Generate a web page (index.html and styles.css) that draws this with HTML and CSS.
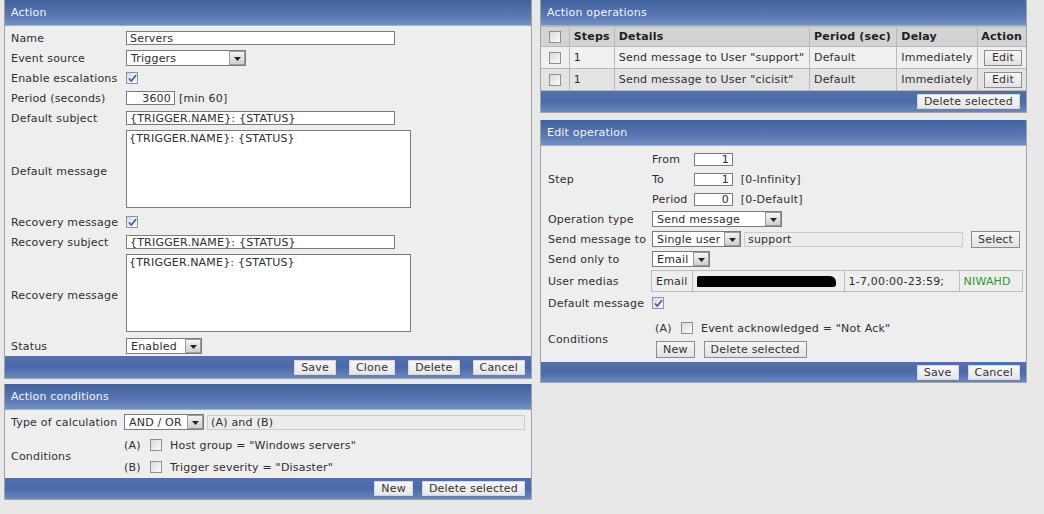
FILE: index.html
```html
<!DOCTYPE html>
<html lang="en">
<head>
    <meta charset="UTF-8">
    <title>Configuration of actions</title>
    <link rel="stylesheet" href="styles.css">
</head>
<body>

<div class="page">

    <div class="col col-left">

        <!-- Action -->
        <div class="panel">
            <div class="panel-head">Action</div>
            <div class="panel-body action-body">
                <div class="row">
                    <div class="lbl">Name</div>
                    <input type="text" class="text w-name" value="Servers">
                </div>
                <div class="row">
                    <div class="lbl">Event source</div>
                    <span class="select w-source"><span class="sel-val">Triggers</span><span class="sel-btn"><svg width="7" height="4" viewBox="0 0 7 4"><path d="M0 0h7L3.5 4z" fill="#222"/></svg></span></span>
                </div>
                <div class="row">
                    <div class="lbl">Enable escalations</div>
                    <span class="check on"><svg width="9" height="9" viewBox="0 0 9 9"><path d="M1 4.5l2.3 2.6L8 1.2" fill="none" stroke="#3d5a93" stroke-width="1.6"/></svg></span>
                </div>
                <div class="row">
                    <div class="lbl">Period (seconds)</div>
                    <input type="text" class="text num w-period" value="3600">
                    <span class="hint">[min 60]</span>
                </div>
                <div class="row">
                    <div class="lbl">Default subject</div>
                    <input type="text" class="text w-name" value="{TRIGGER.NAME}: {STATUS}">
                </div>
                <div class="row row-area">
                    <div class="lbl">Default message</div>
                    <textarea class="area">{TRIGGER.NAME}: {STATUS}</textarea>
                </div>
                <div class="row">
                    <div class="lbl">Recovery message</div>
                    <span class="check on"><svg width="9" height="9" viewBox="0 0 9 9"><path d="M1 4.5l2.3 2.6L8 1.2" fill="none" stroke="#3d5a93" stroke-width="1.6"/></svg></span>
                </div>
                <div class="row">
                    <div class="lbl">Recovery subject</div>
                    <input type="text" class="text w-name" value="{TRIGGER.NAME}: {STATUS}">
                </div>
                <div class="row row-area">
                    <div class="lbl">Recovery message</div>
                    <textarea class="area">{TRIGGER.NAME}: {STATUS}</textarea>
                </div>
                <div class="row">
                    <div class="lbl">Status</div>
                    <span class="select w-status"><span class="sel-val">Enabled</span><span class="sel-btn"><svg width="7" height="4" viewBox="0 0 7 4"><path d="M0 0h7L3.5 4z" fill="#222"/></svg></span></span>
                </div>
            </div>
            <div class="panel-foot foot-main">
                <button class="btn">Save</button>
                <button class="btn">Clone</button>
                <button class="btn">Delete</button>
                <button class="btn">Cancel</button>
            </div>
        </div>

        <!-- Action conditions -->
        <div class="panel">
            <div class="panel-head">Action conditions</div>
            <div class="panel-body cond-body">
                <div class="row">
                    <div class="lbl lbl-cond">Type of calculation</div>
                    <span class="select w-calc"><span class="sel-val">AND / OR</span><span class="sel-btn"><svg width="7" height="4" viewBox="0 0 7 4"><path d="M0 0h7L3.5 4z" fill="#222"/></svg></span></span>
                    <input type="text" class="text ro w-formula" value="(A) and (B)" readonly>
                </div>
                <div class="row row-block calc-cond">
                    <div class="lbl lbl-cond">Conditions</div>
                    <div class="cond-list">
                        <div class="cond-item">
                            <span class="cond-tag">(A)</span>
                            <span class="check"></span>
                            <span>Host group = "Windows servers"</span>
                        </div>
                        <div class="cond-item">
                            <span class="cond-tag">(B)</span>
                            <span class="check"></span>
                            <span>Trigger severity = "Disaster"</span>
                        </div>
                    </div>
                </div>
            </div>
            <div class="panel-foot foot-small foot-cond">
                <button class="btn">New</button>
                <button class="btn">Delete selected</button>
            </div>
        </div>
    </div>

    <div class="col col-right">

        <!-- Action operations -->
        <div class="panel">
            <div class="panel-head">Action operations</div>
            <table class="list">
                <thead>
                    <tr>
                        <th class="c-check"><span class="check"></span></th>
                        <th class="c-steps">Steps</th>
                        <th class="c-details">Details</th>
                        <th class="c-period">Period (sec)</th>
                        <th class="c-delay">Delay</th>
                        <th class="c-action">Action</th>
                    </tr>
                </thead>
                <tbody>
                    <tr class="odd">
                        <td class="c-check"><span class="check"></span></td>
                        <td>1</td>
                        <td>Send message to User "support"</td>
                        <td>Default</td>
                        <td>Immediately</td>
                        <td class="c-action"><button class="btn btn-edit">Edit</button></td>
                    </tr>
                    <tr class="even">
                        <td class="c-check"><span class="check"></span></td>
                        <td>1</td>
                        <td>Send message to User "cicisit"</td>
                        <td>Default</td>
                        <td>Immediately</td>
                        <td class="c-action"><button class="btn btn-edit">Edit</button></td>
                    </tr>
                </tbody>
            </table>
            <div class="panel-foot foot-ops">
                <button class="btn">Delete selected</button>
            </div>
        </div>

        <!-- Edit operation -->
        <div class="panel">
            <div class="panel-head">Edit operation</div>
            <div class="panel-body op-body">
                <div class="row row-block">
                    <div class="lbl lbl-op">Step</div>
                    <div class="step-grid">
                        <span class="sub">From</span>
                        <span><input type="text" class="text num w-step" value="1"></span>
                        <span class="sub">To</span>
                        <span><input type="text" class="text num w-step" value="1"> <span class="hint">[0-Infinity]</span></span>
                        <span class="sub">Period</span>
                        <span><input type="text" class="text num w-step" value="0"> <span class="hint">[0-Default]</span></span>
                    </div>
                </div>
                <div class="row">
                    <div class="lbl lbl-op">Operation type</div>
                    <span class="select w-optype"><span class="sel-val">Send message</span><span class="sel-btn"><svg width="7" height="4" viewBox="0 0 7 4"><path d="M0 0h7L3.5 4z" fill="#222"/></svg></span></span>
                </div>
                <div class="row">
                    <div class="lbl lbl-op">Send message to</div>
                    <span class="select w-target"><span class="sel-val">Single user</span><span class="sel-btn"><svg width="7" height="4" viewBox="0 0 7 4"><path d="M0 0h7L3.5 4z" fill="#222"/></svg></span></span>
                    <input type="text" class="text ro w-user" value="support" readonly>
                    <button class="btn btn-edit btn-select">Select</button>
                </div>
                <div class="row">
                    <div class="lbl lbl-op">Send only to</div>
                    <span class="select w-media"><span class="sel-val">Email</span><span class="sel-btn"><svg width="7" height="4" viewBox="0 0 7 4"><path d="M0 0h7L3.5 4z" fill="#222"/></svg></span></span>
                </div>
                <div class="row row-medias">
                    <div class="lbl lbl-op">User medias</div>
                    <table class="medias">
                        <tr>
                            <td class="m-type">Email</td>
                            <td class="m-addr"><span class="redact"></span></td>
                            <td class="m-when">1-7,00:00-23:59;</td>
                            <td class="m-sev">NIWAHD</td>
                        </tr>
                    </table>
                </div>
                <div class="row">
                    <div class="lbl lbl-op">Default message</div>
                    <span class="check on"><svg width="9" height="9" viewBox="0 0 9 9"><path d="M1 4.5l2.3 2.6L8 1.2" fill="none" stroke="#3d5a93" stroke-width="1.6"/></svg></span>
                </div>
                <div class="row row-block op-cond">
                    <div class="lbl lbl-op">Conditions</div>
                    <div class="cond-list">
                        <div class="cond-item">
                            <span class="cond-tag">(A)</span>
                            <span class="check"></span>
                            <span>Event acknowledged = "Not Ack"</span>
                        </div>
                        <div class="cond-btns">
                            <button class="btn btn-edit">New</button>
                            <button class="btn btn-edit">Delete selected</button>
                        </div>
                    </div>
                </div>
            </div>
            <div class="panel-foot foot-small">
                <button class="btn">Save</button>
                <button class="btn">Cancel</button>
            </div>
        </div>
    </div>

</div>

</body>
</html>
```

FILE: styles.css
```css
body {
    margin: 0;
    background-color: #e8e8e8;
    font-family: "DejaVu Sans", Verdana, sans-serif;
    font-size: 11px;
    letter-spacing: 0.2px;
    color: #2e2e2e;
}

.page {
    display: flex;
    align-items: flex-start;
    gap: 8px;
    padding-left: 4px;
}

.col {
    display: flex;
    flex-direction: column;
}
.col-left {
    width: 528px;
    gap: 5px;
}
.col-right {
    width: 487px;
    gap: 7px;
}

/* panels */
.panel {
    background-color: #eeeeee;
    border: 1px solid #a3a3a3;
    border-top: none;
}

.panel-head {
    height: 25px;
    line-height: 25px;
    padding-left: 6px;
    color: #f2f4fa;
    background: linear-gradient(#42629f, #5877b0 60%, #7390c2);
    border-bottom: 1px solid #9fb0cf;
}

.panel-foot {
    height: 22px;
    display: flex;
    justify-content: flex-end;
    align-items: center;
    gap: 9px;
    padding-right: 6px;
    background: linear-gradient(#5272ae, #4a69a8 50%, #6a87bc);
}
.foot-main {
    gap: 13px;
    padding-right: 6px;
}
.foot-small {
    height: 20px;
}
.foot-cond {
    height: 21px;
}
.foot-ops {
    height: 21px;
}

.panel-body {
    padding: 2px 0 0 6px;
}
.cond-body {
    padding-top: 2px;
    padding-bottom: 0;
}
.calc-cond {
    padding-top: 2px;
}
.op-body {
    padding: 3px 0 2px 7px;
}

/* form rows */
.row {
    display: flex;
    align-items: center;
    min-height: 20px;
}
.row-area {
    height: 84px;
    align-items: flex-start;
    box-sizing: border-box;
    padding-top: 2px;
}
.row-area .lbl {
    align-self: center;
}
.row-block {
    align-items: center;
}

.lbl {
    width: 115px;
    flex: none;
}
.lbl-cond {
    width: 113px;
}
.lbl-op {
    width: 104px;
}

.hint {
    margin-left: 4px;
}

/* inputs */
.text {
    box-sizing: border-box;
    height: 14px;
    margin: 0;
    padding: 0 3px;
    border: 1px solid #7b7b7b;
    background: #fff;
    font-family: inherit;
    font-size: 11px;
    letter-spacing: 0.2px;
    color: #2e2e2e;
}
.text.num {
    text-align: right;
}
.text.ro {
    height: 15px;
    border-color: #cbcbcb;
    background: #ececec;
}

.w-name { width: 269px; }
.w-period { width: 49px; }
.w-formula { width: 318px; margin-left: 3px; }
.w-step { width: 39px; height: 13px; }
.w-user { width: 219px; height: 16px; margin-left: 3px; }

.area {
    box-sizing: border-box;
    width: 285px;
    height: 78px;
    margin: 0;
    padding: 1px 2px;
    border: 1px solid #7b7b7b;
    resize: none;
    font-family: inherit;
    font-size: 11px;
    letter-spacing: 0.2px;
    color: #2e2e2e;
}

/* dropdowns */
.select {
    box-sizing: border-box;
    display: inline-flex;
    align-items: center;
    height: 16px;
    border: 1px solid #7b7b7b;
    background: #fff;
}
.sel-val {
    flex: 1;
    padding-left: 4px;
    white-space: nowrap;
}
.sel-btn {
    box-sizing: border-box;
    width: 16px;
    height: 14px;
    display: flex;
    align-items: flex-end;
    justify-content: center;
    padding-bottom: 3px;
    border: 1px solid #9c9c9c;
    background: linear-gradient(#f4f4f4, #cfcfcf);
}

.w-source { width: 120px; }
.w-status { width: 76px; }
.w-calc { width: 80px; }
.w-optype { width: 130px; }
.w-target { width: 89px; }
.w-media { width: 58px; }

/* checkboxes */
.check {
    box-sizing: border-box;
    display: inline-flex;
    align-items: center;
    justify-content: center;
    width: 12px;
    height: 12px;
    border: 1px solid #8f8f8f;
    background: linear-gradient(135deg, #d9d9d9, #fbfbfb);
    vertical-align: middle;
}
.check.on {
    background: linear-gradient(135deg, #d8dbe3, #f6f7fa);
    border-color: #8d94a3;
}

/* conditions */
.cond-list {
    display: flex;
    flex-direction: column;
}
.cond-item {
    display: flex;
    align-items: center;
    height: 22px;
}
.cond-tag {
    width: 26px;
}
.cond-item .check {
    margin-right: 8px;
}
.cond-btns {
    display: flex;
    gap: 9px;
    height: 22px;
    align-items: center;
    padding-left: 4px;
}
.op-cond {
    margin-top: 5px;
}
.op-cond .cond-item {
    height: 20px;
    padding-left: 3px;
}

/* step block */
.step-grid {
    display: grid;
    grid-template-columns: 42px auto;
    grid-auto-rows: 20px;
    align-items: center;
}

/* buttons */
.btn {
    box-sizing: border-box;
    height: 15px;
    margin: 0;
    padding: 0 6px;
    border: 1px solid #d6d6d6;
    background: linear-gradient(#f7f7f7, #e6e6e6);
    font-family: inherit;
    font-size: 11px;
    letter-spacing: 0.2px;
    line-height: 13px;
    color: #333;
}
.btn-edit {
    height: 17px;
    border-color: #8c8c8c;
    background: linear-gradient(#f6f6f6, #e2e2e2);
}
.btn-select {
    margin-left: 8px;
}

/* operations list */
.list {
    width: 100%;
    border-collapse: collapse;
    background: #ececec;
}
.list th,
.list td {
    border: 1px solid #b9b9b9;
    padding: 0 4px;
    text-align: left;
    white-space: nowrap;
}
.list tr > :first-child { border-left: none; }
.list tr > :last-child { border-right: none; }
.list th {
    height: 19px;
    background: #d3d3d3;
    font-weight: bold;
    color: #1f1f1f;
}
.list td {
    height: 21px;
}
.list .odd td {
    background: #f0f0f0;
}
.list .even td {
    background: #e3e3e3;
}
.list .c-check {
    width: 20px;
    padding-left: 8px;
}
.c-steps { width: 36px; }
.c-details { width: 187px; }
.c-period { width: 80px; }
.c-delay { width: 73px; }
.list .c-action {
    text-align: right;
    padding: 0 4px 0 3px;
}
.list .btn-edit {
    height: 16px;
    padding: 0 7px;
}

/* user medias */
.row-medias {
    height: 24px;
}
.medias {
    border-collapse: collapse;
    margin-left: -1px;
}
.medias td {
    height: 20px;
    border: 1px solid #bcbcbc;
    padding: 0 4px;
    white-space: nowrap;
}
.m-type { width: 30px; }
.m-addr { width: 143px; padding: 0 2px; }
.m-when { width: 106px; }
.m-sev {
    width: 54px;
    color: #2a9a2a;
}
.redact {
    display: block;
    width: 139px;
    height: 11px;
    background: #000;
    border-radius: 2px 6px 3px 1px;
}
```
